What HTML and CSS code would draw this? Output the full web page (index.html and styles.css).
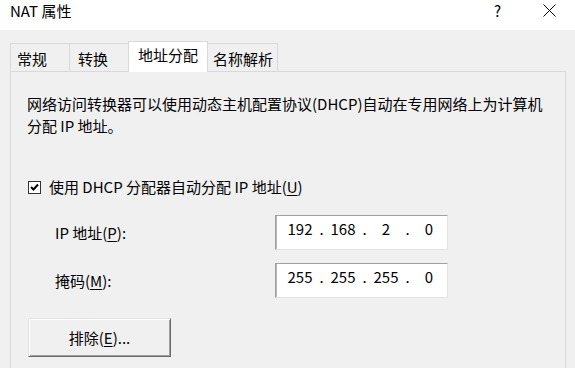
FILE: index.html
```html
<!DOCTYPE html>
<html lang="zh-CN">
<head>
<meta charset="utf-8">
<title>NAT 属性</title>
<link rel="stylesheet" href="styles.css">
</head>
<body>
<div class="dialog">
  <div class="titlebar">
    <span class="title">NAT 属性</span>
    <div class="tb-btns">
      <span class="help">?</span>
      <svg class="close" width="13" height="13" viewBox="0 0 13 13"><path d="M0.5 0.5 L12.5 12.5 M12.5 0.5 L0.5 12.5" stroke="#000" stroke-width="1" fill="none"/></svg>
    </div>
  </div>
  <div class="tabs">
    <div class="tab t1">常规</div>
    <div class="tab t2">转换</div>
    <div class="tab tab-active t3">地址分配</div>
    <div class="tab t4">名称解析</div>
  </div>
  <div class="panel">
    <p class="desc">网络访问转换器可以使用动态主机配置协议(DHCP)自动在专用网络上为计算机<br>分配 IP 地址。</p>
    <div class="check-row">
      <svg class="checkbox" width="13" height="13" viewBox="0 0 13 13">
        <rect x="0.5" y="0.5" width="12" height="12" fill="#fff" stroke="#333"/>
        <path d="M3 6 L5.5 8.5 L10 3.5" stroke="#000" stroke-width="2" fill="none"/>
      </svg>
      <span>使用 DHCP 分配器自动分配 IP 地址(<u>U</u>)</span>
    </div>
    <div class="field-row">
      <span class="label">IP 地址(<u>P</u>):</span>
      <div class="ipbox">
        <span class="oct">192</span><span class="dot">.</span><span class="oct">168</span><span class="dot">.</span><span class="oct">2</span><span class="dot">.</span><span class="oct">0</span>
      </div>
    </div>
    <div class="field-row second">
      <span class="label">掩码(<u>M</u>):</span>
      <div class="ipbox">
        <span class="oct">255</span><span class="dot">.</span><span class="oct">255</span><span class="dot">.</span><span class="oct">255</span><span class="dot">.</span><span class="oct">0</span>
      </div>
    </div>
    <div class="btn">排除(<u>E</u>)...</div>
  </div>
</div>
</body>
</html>
```
FILE: styles.css
```css
html, body {
  margin: 0;
  padding: 0;
  width: 575px;
  height: 368px;
  overflow: hidden;
  background: #f0f0f0;
}
body {
  font-family: "Noto Sans CJK SC", "Noto Sans", sans-serif;
  font-size: 15px;
  line-height: 22px;
  color: #000;
}
.titlebar {
  height: 30px;
  background: #fff;
  display: flex;
  align-items: flex-start;
  padding-left: 10px;
  box-sizing: border-box;
}
.title {
  line-height: 22px;
}
.tb-btns {
  margin-left: auto;
  margin-right: 19px;
  display: flex;
  align-items: flex-start;
}
.help {
  line-height: 22px;
  margin-right: 42px;
}
.close {
  margin-top: 4px;
  display: block;
}
.tabs {
  display: flex;
  align-items: flex-end;
  margin: 11px 0 0 10px;
  height: 30px;
}
.tab {
  box-sizing: border-box;
  height: 28px;
  border: 1px solid #d9d9d9;
  border-bottom: none;
  background: #f0f0f0;
  padding: 4px 0 0 7px;
  margin-left: -1px;
  white-space: nowrap;
}
.t1 { width: 60px; margin-left: 0; padding-left: 6px; }
.t2 { width: 60px; padding-left: 8px; }
.t3 { width: 80px; }
.t4 { width: 71px; padding-left: 5px; }
.tab-active {
  height: 31px;
  background: #fff;
  padding: 2px 0 0 9px;
  margin-bottom: -1px;
  position: relative;
  z-index: 1;
}
.panel {
  margin: 0 9px 0 10px;
  border: 1px solid #d9d9d9;
  border-bottom: none;
  height: 297px;
  padding: 21px 16px 0 16px;
  box-sizing: border-box;
}
.desc {
  margin: 0;
}
.check-row {
  display: flex;
  align-items: center;
  margin-top: 39px;
}
.checkbox {
  display: block;
  margin-left: 1px;
  margin-right: 8px;
}
.field-row {
  display: flex;
  align-items: center;
  margin-top: 17px;
  padding-left: 28px;
}
.field-row.second {
  margin-top: 13px;
}
.label {
  width: 220px;
}
.ipbox {
  box-sizing: border-box;
  width: 173px;
  height: 35px;
  background: #fff;
  border: 1px solid;
  border-color: #a0a0a0 #e3e3e3 #e3e3e3 #a0a0a0;
  box-shadow: inset 1px 0 0 #b4b4b4;
  display: flex;
  align-items: flex-start;
  padding: 2px 0 0 7px;
}
.oct {
  width: 34px;
  text-align: center;
}
.dot {
  width: 9px;
  text-align: center;
}
.btn {
  box-sizing: border-box;
  margin: 20px 0 0 1px;
  width: 143px;
  height: 39px;
  background: #f0f0f0;
  border-top: 1px solid #e3e3e3;
  border-left: 1px solid #e3e3e3;
  border-right: 1px solid #696969;
  border-bottom: 1px solid #696969;
  box-shadow: inset 1px 1px 0 #fff, inset -1px -1px 0 #a0a0a0;
  display: flex;
  align-items: center;
  justify-content: center;
}
u {
  text-decoration: underline;
  text-underline-offset: 2px;
}
```
